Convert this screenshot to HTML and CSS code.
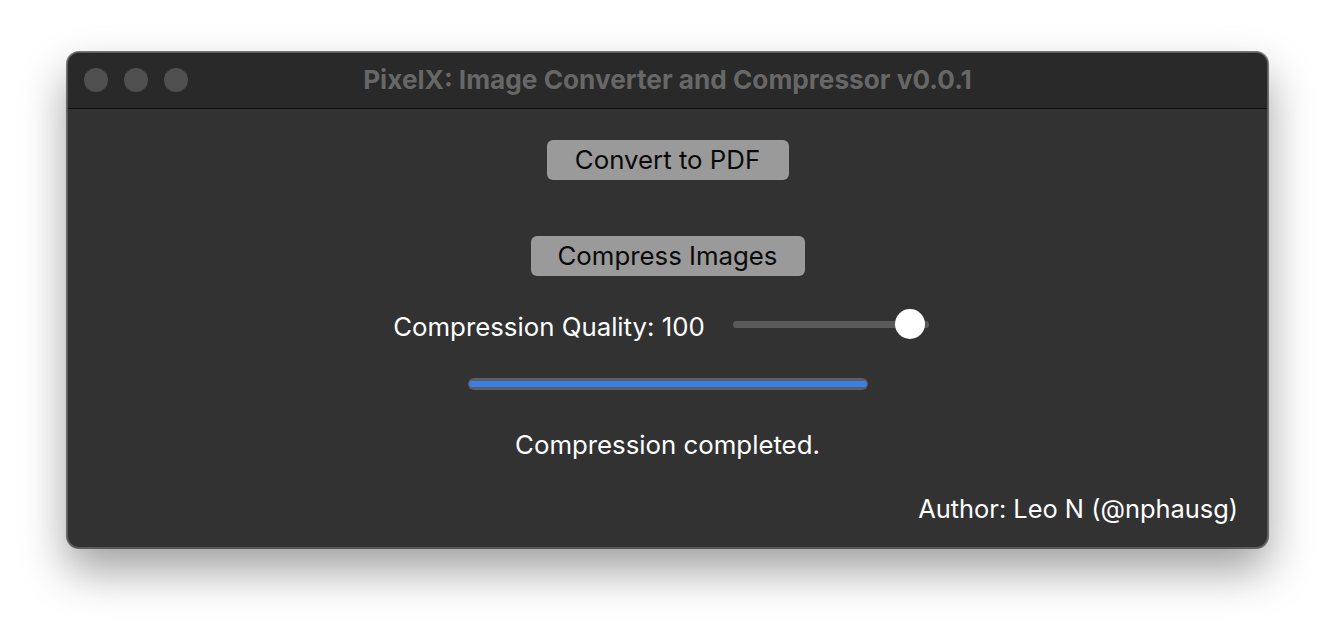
FILE: index.html
```html
<!DOCTYPE html>
<html>
<head>
<meta charset="utf-8">
<link rel="stylesheet" href="styles.css">
</head>
<body>
<div class="desktop">
  <div class="window">
    <div class="titlebar">
      <div class="lights">
        <span class="light"></span>
        <span class="light"></span>
        <span class="light"></span>
      </div>
      <div class="title">PixelX: Image Converter and Compressor v0.0.1</div>
    </div>
    <div class="content">
      <button class="btn btn-pdf">Convert to PDF</button>
      <button class="btn btn-compress">Compress Images</button>
      <div class="quality-row">
        <span class="label">Compression Quality: 100</span>
        <div class="slider">
          <div class="track"></div>
          <div class="knob"></div>
        </div>
      </div>
      <div class="progress"><div class="progress-fill" style="width: 100%"></div></div>
      <div class="status">Compression completed.</div>
      <div class="author">Author: Leo N (@nphausg)</div>
    </div>
  </div>
</div>
</body>
</html>
```

FILE: styles.css
```css
html, body {
  margin: 0;
  padding: 0;
  background: #ffffff;
  font-family: Inter, "Noto Sans", "Liberation Sans", sans-serif;
}

.desktop {
  width: 1336px;
  height: 632px;
  padding: 52px 0 0 67px;
  box-sizing: border-box;
}

.window {
  width: 1201px;
  height: 496px;
  box-sizing: border-box;
  border: 1px solid #5b5b5b;
  border-radius: 12px;
  background: #323232;
  overflow: hidden;
  display: flex;
  flex-direction: column;
  box-shadow: 0 22px 45px rgba(0, 0, 0, 0.38), 0 0 0 1px rgba(0, 0, 0, 0.5);
}

.titlebar {
  height: 56px;
  flex: none;
  box-sizing: border-box;
  background: #282928;
  border-bottom: 1px solid #0e0e0e;
  display: flex;
  align-items: center;
  position: relative;
}

.lights {
  display: flex;
  gap: 16px;
  padding-left: 16px;
  position: absolute;
  left: 0;
  top: 15px;
}

.light {
  width: 24px;
  height: 24px;
  border-radius: 50%;
  background: #4f504f;
}

.title {
  flex: 1;
  text-align: center;
  color: #676767;
  font-weight: 700;
  font-size: 26.2px;
  line-height: 30px;
  margin-top: -2px;
}

.content {
  flex: 1;
  display: flex;
  flex-direction: column;
  align-items: center;
  padding-top: 31px;
}

.btn {
  font-family: inherit;
  font-size: 25.8px;
  color: #0a0a0a;
  background: #9a9a9a;
  border: none;
  border-radius: 6px;
  height: 40px;
  padding: 0;
  line-height: 40px;
}

.btn-pdf {
  width: 242px;
}

.btn-compress {
  width: 274px;
  margin-top: 56px;
}

.quality-row {
  margin-top: 32px;
  display: flex;
  align-items: center;
  gap: 28px;
  padding-right: 13px;
  height: 32px;
}

.label {
  color: #ffffff;
  font-size: 25.8px;
  line-height: 30px;
  margin-top: 5px;
  white-space: nowrap;
}

.slider {
  width: 196px;
  height: 30px;
  position: relative;
  display: flex;
  align-items: center;
  flex: none;
}

.track {
  width: 100%;
  height: 7px;
  border-radius: 4px;
  background: #5a5a5a;
}

.knob {
  position: absolute;
  left: 162px;
  top: 0;
  width: 30px;
  height: 30px;
  border-radius: 50%;
  background: #ffffff;
}

.progress {
  margin-top: 38px;
  width: 400px;
  height: 12px;
  box-sizing: border-box;
  padding: 3px 1px;
  border-radius: 6px;
  background: #5e5e5e;
  display: flex;
}

.progress-fill {
  height: 6px;
  border-radius: 3px;
  background: #3b7ee6;
}

.status {
  margin-top: 40px;
  color: #ffffff;
  font-size: 25.8px;
  line-height: 30px;
}

.author {
  align-self: flex-end;
  margin-right: 29px;
  margin-top: 34px;
  color: #ffffff;
  font-size: 25.4px;
  line-height: 30px;
}
```
